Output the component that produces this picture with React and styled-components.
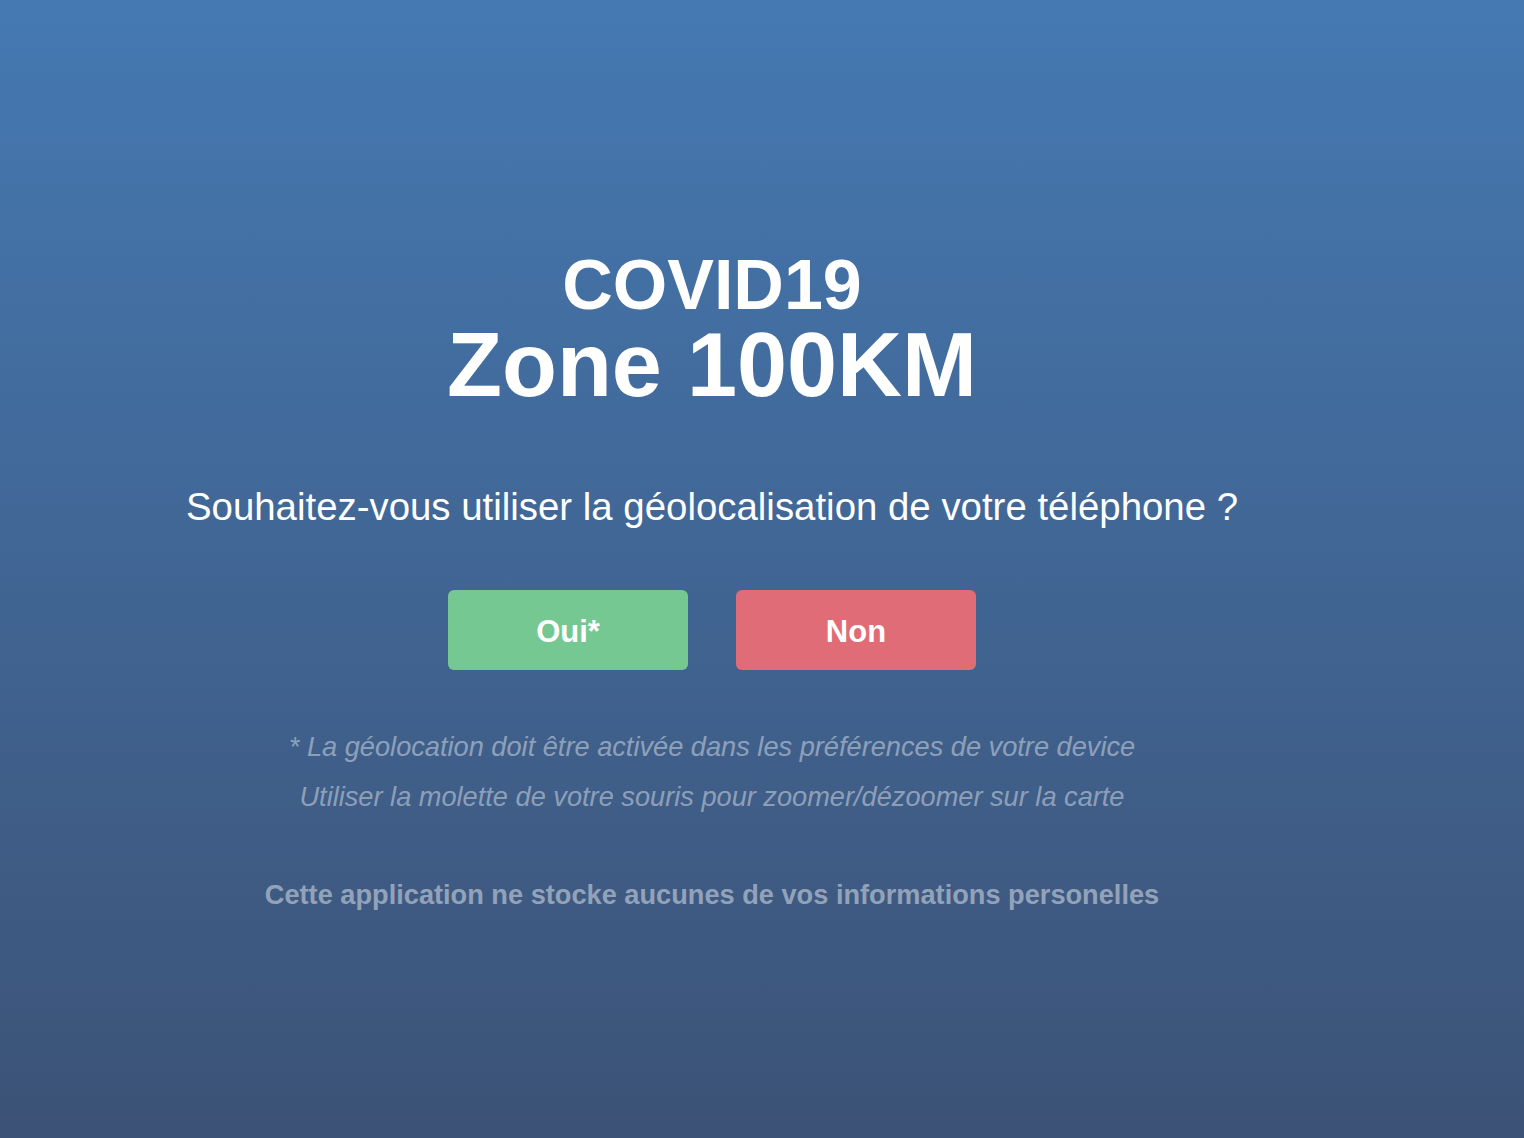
import React from 'react';
import styled, { createGlobalStyle } from 'styled-components';

const GlobalStyle = createGlobalStyle`
  html, body {
    margin: 0;
    padding: 0;
    height: 100%;
  }
  body {
    font-family: 'Liberation Sans', Arial, Helvetica, sans-serif;
    background: #3c5276;
  }
`;

const Page = styled.div`
  min-height: 100vh;
  box-sizing: border-box;
  display: flex;
  flex-direction: column;
  align-items: center;
  padding: 250px 100px 0 0;
  background: linear-gradient(180deg, #4579b2 0%, #3c5276 100%);
  color: #ffffff;
`;

const Title = styled.h1`
  margin: 0;
  display: flex;
  flex-direction: column;
  align-items: center;
  font-weight: 700;
  line-height: 1;
`;

const TitleLine = styled.span`
  font-size: ${(p) => p.size}px;
`;

const Question = styled.p`
  margin: 78px 0 0;
  font-size: 38.4px;
  line-height: 1;
`;

const Actions = styled.div`
  display: flex;
  gap: 48px;
  margin-top: 64px;
`;

const ChoiceButton = styled.button`
  width: 240px;
  height: 80px;
  padding: 3px 0 0;
  border: none;
  border-radius: 6px;
  background: ${(p) => p.bg};
  color: #ffffff;
  font-family: inherit;
  font-size: 31px;
  font-weight: 700;
  cursor: pointer;
`;

const Notes = styled.div`
  margin-top: 52px;
  display: flex;
  flex-direction: column;
  align-items: center;
  font-size: 27.2px;
  line-height: 50px;
  font-style: italic;
  color: rgba(255, 255, 255, 0.42);
`;

const Privacy = styled.p`
  margin: 48px 0 0;
  font-size: 27.2px;
  line-height: 50px;
  font-weight: 700;
  color: rgba(255, 255, 255, 0.45);
`;

const App = () => {
  return (
    <>
      <GlobalStyle />
      <Page>
        <Title>
          <TitleLine size={70}>COVID19</TitleLine>
          <TitleLine size={90}>Zone 100KM</TitleLine>
        </Title>
        <Question>Souhaitez-vous utiliser la géolocalisation de votre téléphone ?</Question>
        <Actions>
          <ChoiceButton bg='#76c893'>Oui*</ChoiceButton>
          <ChoiceButton bg='#df6c77'>Non</ChoiceButton>
        </Actions>
        <Notes>
          <span>* La géolocation doit être activée dans les préférences de votre device</span>
          <span>Utiliser la molette de votre souris pour zoomer/dézoomer sur la carte</span>
        </Notes>
        <Privacy>Cette application ne stocke aucunes de vos informations personelles</Privacy>
      </Page>
    </>
  );
};

export default App;
